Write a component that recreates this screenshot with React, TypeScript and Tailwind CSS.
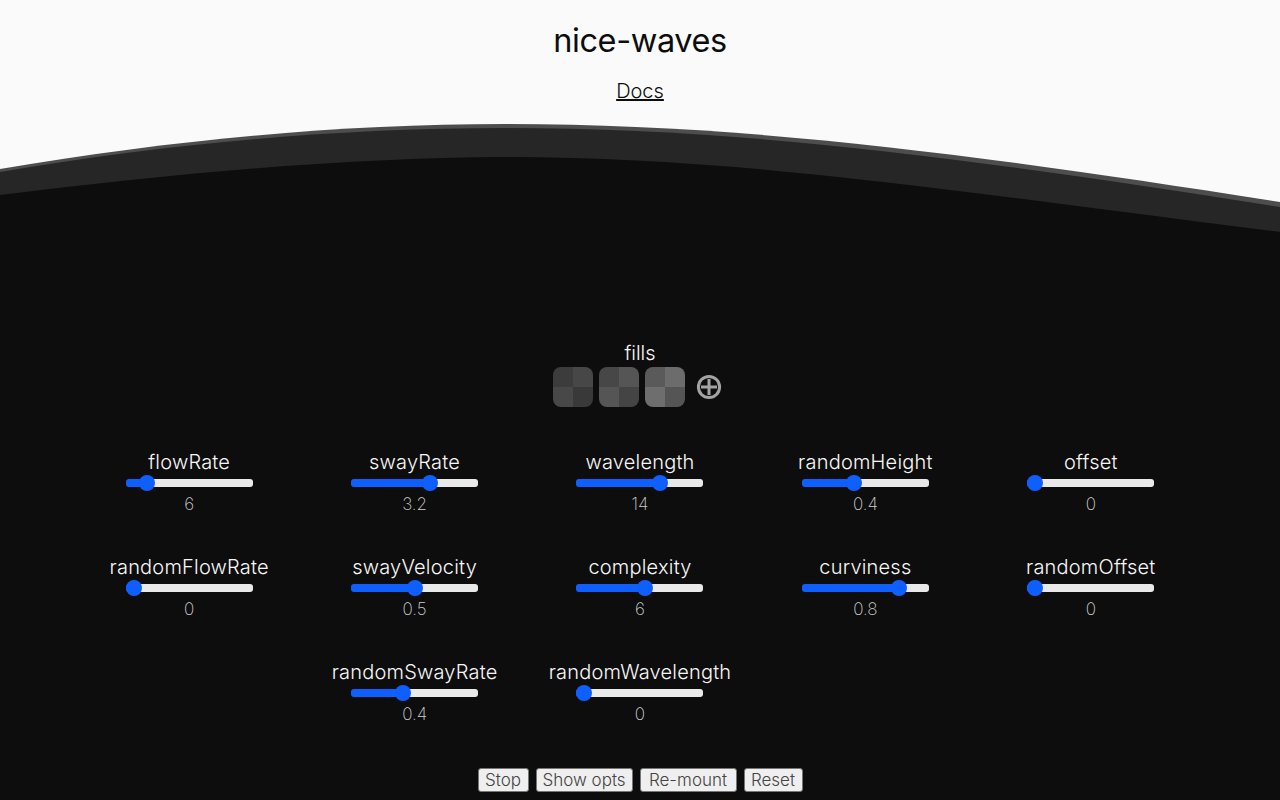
import { Fragment } from "react";

const sliders = [
  { name: "flowRate", min: 0, max: 50, step: 1, value: 6 },
  { name: "swayRate", min: 0, max: 5, step: 0.1, value: 3.2 },
  { name: "wavelength", min: 1, max: 20, step: 1, value: 14 },
  { name: "randomHeight", min: 0, max: 1, step: 0.1, value: 0.4 },
  { name: "offset", min: 0, max: 100, step: 1, value: 0 },
  { name: "randomFlowRate", min: 0, max: 1, step: 0.1, value: 0 },
  { name: "swayVelocity", min: 0, max: 1, step: 0.1, value: 0.5 },
  { name: "complexity", min: 0, max: 11, step: 1, value: 6 },
  { name: "curviness", min: 0, max: 1, step: 0.1, value: 0.8 },
  { name: "randomOffset", min: 0, max: 1, step: 0.1, value: 0 },
  { name: "randomSwayRate", min: 0, max: 1, step: 0.1, value: 0.4 },
  { name: "randomWavelength", min: 0, max: 1, step: 0.1, value: 0 },
];

const swatches = [
  ["#3c3c3c", "#474747", "#484848", "#393939"],
  ["#474747", "#555555", "#555555", "#444444"],
  ["#5a5a5a", "#6c6c6c", "#6e6e6e", "#555555"],
];

const buttons = [
  { label: "Stop", width: "w-[51px]" },
  { label: "Show opts", width: "w-[97px]" },
  { label: "Re-mount", width: "w-[97px]" },
  { label: "Reset", width: "w-[59px]" },
];

function Slider({ name, min, max, step, value }: (typeof sliders)[number]) {
  // thumb centre in px, the blue part of the track stops there
  const stop = 8 + ((value - min) / (max - min)) * 111;

  return (
    <div className="flex h-[105px] flex-col items-center">
      <label className="h-[26px] text-[20px] leading-[26px] font-light tracking-[0.2px] text-[#f7f7f7]">
        {name}
      </label>
      <input
        type="range"
        min={min}
        max={max}
        step={step}
        defaultValue={value}
        style={{ background: `linear-gradient(to right, #0f5fff ${stop}px, #e9e9e9 ${stop}px)` }}
        className="mx-0 my-1 h-2 w-[127px] appearance-none rounded-[3px] [&::-webkit-slider-thumb]:h-4 [&::-webkit-slider-thumb]:w-4 [&::-webkit-slider-thumb]:appearance-none [&::-webkit-slider-thumb]:rounded-full [&::-webkit-slider-thumb]:bg-[#0f5fff]"
      />
      <span className="mt-[1px] h-6 text-[17px] leading-6 font-extralight text-[#d0d0d0]">
        {value}
      </span>
    </div>
  );
}

export default function App() {
  return (
    <div className="flex h-screen flex-col overflow-hidden bg-[#fafafa] font-['Inter',sans-serif]">
      {/* Header */}
      <header className="flex h-[120px] flex-col items-center">
        <h1 className="mt-5 text-[32.5px] leading-[42px] font-normal tracking-[-0.4px] text-[#0d0d0d]">
          nice-waves
        </h1>
        <a href="#docs" className="mt-4 text-[20px] leading-[26px] font-light text-[#0d0d0d] underline">
          Docs
        </a>
      </header>

      {/* Waves */}
      <svg viewBox="0 0 1280 115" className="block h-[115px] w-[1280px] shrink-0" preserveAspectRatio="none">
        <path d="M0 49 C170 20 340 4 505 4 C750 4 980 35 1280 82 L1280 115 L0 115 Z" fill="#4d4d4d" />
        <path d="M0 52 C170 23 340 8 505 8 C750 8 980 40 1280 87 L1280 115 L0 115 Z" fill="#262626" />
        <path d="M0 75 C170 54 340 38 505 37 C750 37 980 75 1280 112 L1280 115 L0 115 Z" fill="#0d0d0d" />
      </svg>

      {/* Controls */}
      <main className="flex flex-1 flex-col items-center bg-[#0d0d0d]">
        <div className="mt-[105px] flex flex-col items-center">
          <span className="h-[27px] text-[20px] leading-[26px] font-light text-[#f7f7f7]">fills</span>
          <div className="flex items-center gap-1.5">
            {swatches.map((colors, i) => (
              <div key={i} className="grid h-10 w-10 grid-cols-2 grid-rows-2 overflow-hidden rounded-lg">
                {colors.map((c, j) => (
                  <div key={j} style={{ backgroundColor: c }} />
                ))}
              </div>
            ))}
            <svg viewBox="0 0 26 26" className="mr-[5px] ml-[5px] h-[26px] w-[26px]" fill="none" stroke="#a3a3a3" strokeWidth="3">
              <circle cx="13" cy="13" r="10.6" />
              <path d="M13 5 V21 M5 13 H21" />
            </svg>
          </div>
        </div>

        <div className="mt-[42px] grid w-[1127px] grid-cols-5">
          {sliders.map((s, i) => (
            <Fragment key={s.name}>
              {i === 10 && <div />}
              <Slider {...s} />
            </Fragment>
          ))}
        </div>

        <div className="mt-1 flex gap-[7px]">
          {buttons.map((b) => (
            <button
              key={b.label}
              className={`h-6 rounded-[3px] border border-[#767676] bg-[#efefef] text-[17px] leading-[22px] font-light text-[#444] ${b.width}`}
            >
              {b.label}
            </button>
          ))}
        </div>
      </main>
    </div>
  );
}
